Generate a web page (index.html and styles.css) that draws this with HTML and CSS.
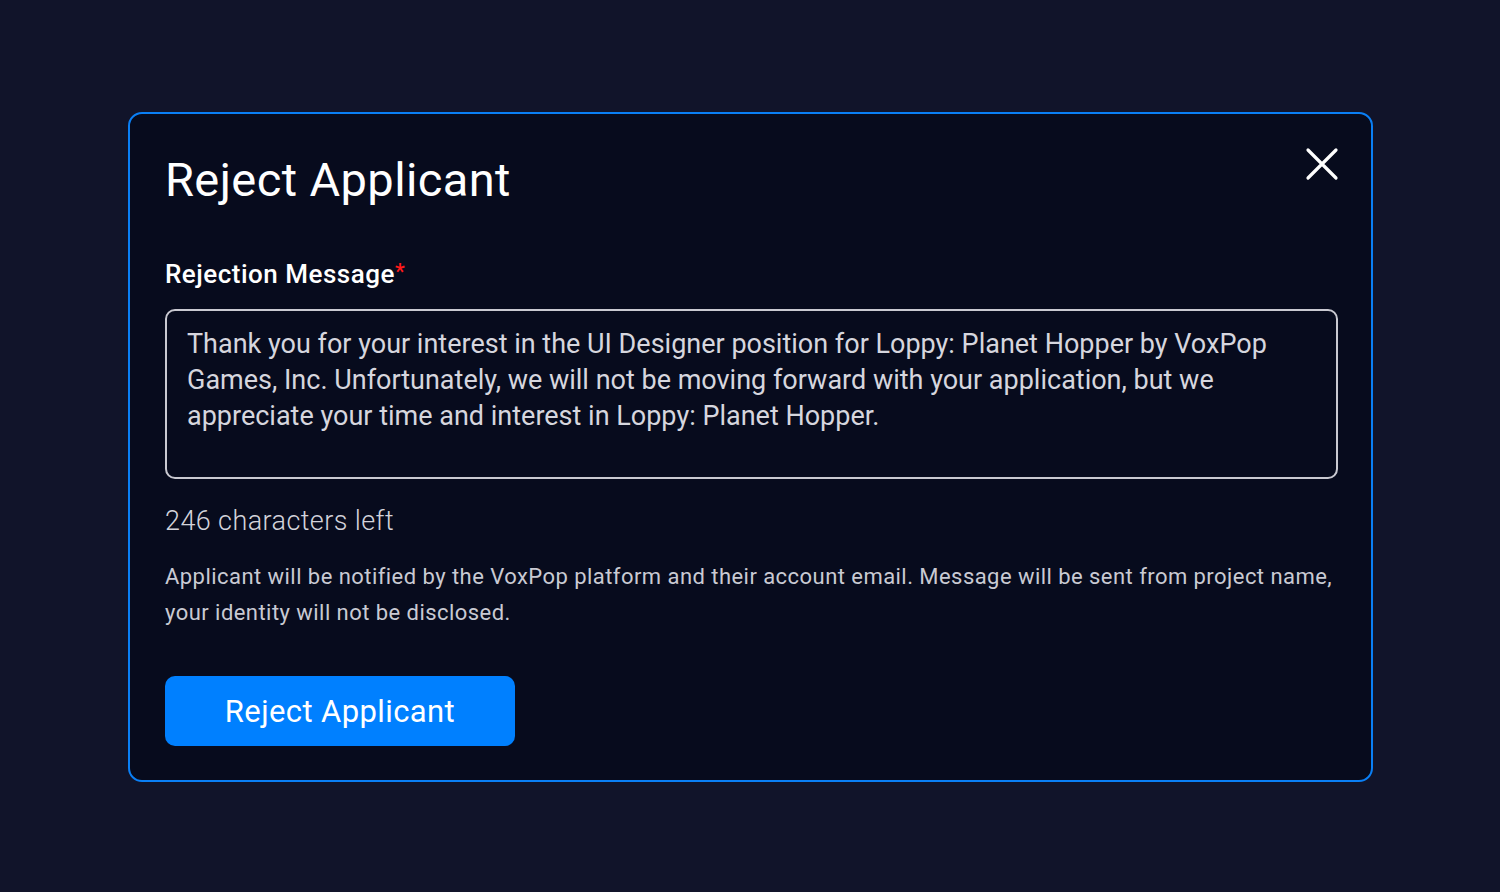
FILE: index.html
```html
<!DOCTYPE html>
<html lang="en">
<head>
<meta charset="utf-8">
<title>Reject Applicant</title>
<link rel="stylesheet" href="styles.css">
</head>
<body>
<main class="page">
  <section class="modal" role="dialog" aria-labelledby="modal-title">
    <header class="modal-head">
      <h1 id="modal-title" class="modal-title">Reject Applicant</h1>
      <button class="close-btn" type="button" aria-label="Close">
        <svg width="34" height="34" viewBox="0 0 34 34" fill="none" stroke="#ffffff" stroke-width="3.2" stroke-linecap="round">
          <path d="M3 3 L31 31 M31 3 L3 31"/>
        </svg>
      </button>
    </header>

    <label class="field-label" for="reject-msg">Rejection Message<span class="req">*</span></label>
    <textarea id="reject-msg" class="message" rows="4">Thank you for your interest in the UI Designer position for Loppy: Planet Hopper by VoxPop Games, Inc. Unfortunately, we will not be moving forward with your application, but we appreciate your time and interest in Loppy: Planet Hopper.</textarea>

    <p class="counter">246 characters left</p>
    <p class="notice">Applicant will be notified by the VoxPop platform and their account email. Message will be sent from project name, your identity will not be disclosed.</p>

    <button class="primary-btn" type="button">Reject Applicant</button>
  </section>
</main>
</body>
</html>
```

FILE: styles.css
```css
* {
  box-sizing: border-box;
}

html, body {
  margin: 0;
  height: 100%;
}

body {
  background: #11142a;
  font-family: Roboto, "Noto Sans", "Liberation Sans", sans-serif;
  color: #ffffff;
}

.page {
  padding: 112px 128px 0 128px;
}

.modal {
  width: 1245px;
  height: 670px;
  background: #070b1d;
  border: 2px solid #0a7ff5;
  border-radius: 14px;
  padding: 30px 32px 0 35px;
  display: flex;
  flex-direction: column;
  align-items: flex-start;
}

.modal-head {
  width: 100%;
  display: flex;
  justify-content: space-between;
  align-items: flex-start;
}

.modal-title {
  margin: 0;
  font-size: 47px;
  font-weight: 400;
  line-height: 72px;
  letter-spacing: 0.4px;
}

.close-btn {
  background: none;
  border: 0;
  padding: 0;
  margin-top: 3px;
  width: 34px;
  height: 34px;
  cursor: pointer;
  display: flex;
}

.field-label {
  margin-top: 41px;
  font-size: 26px;
  font-weight: 500;
  line-height: 30px;
  letter-spacing: 0.5px;
}

.req {
  color: #ff1a1a;
  font-size: 22px;
  vertical-align: 4px;
}

.message {
  margin-top: 20px;
  width: 1173px;
  height: 170px;
  background: #070b1d;
  border: 2px solid #c9c9d1;
  border-radius: 10px;
  padding: 15px 20px 14px;
  color: #d6d6de;
  font-family: inherit;
  font-size: 27px;
  line-height: 36px;
  font-weight: 400;
  resize: none;
  outline: none;
  overflow: hidden;
}

.counter {
  margin: 24px 0 0 0;
  font-size: 27px;
  line-height: 36px;
  color: #d3d3db;
  font-weight: 300;
  letter-spacing: 0.4px;
}

.notice {
  margin: 20px 0 0 0;
  font-size: 22px;
  line-height: 36px;
  color: #c9cad3;
  font-weight: 400;
  letter-spacing: 0.45px;
}

.primary-btn {
  margin-top: 45px;
  width: 350px;
  height: 70px;
  background: #0080ff;
  border: 0;
  border-radius: 10px;
  color: #ffffff;
  font-family: inherit;
  font-size: 31px;
  font-weight: 400;
  letter-spacing: 0.4px;
  cursor: pointer;
}
```
